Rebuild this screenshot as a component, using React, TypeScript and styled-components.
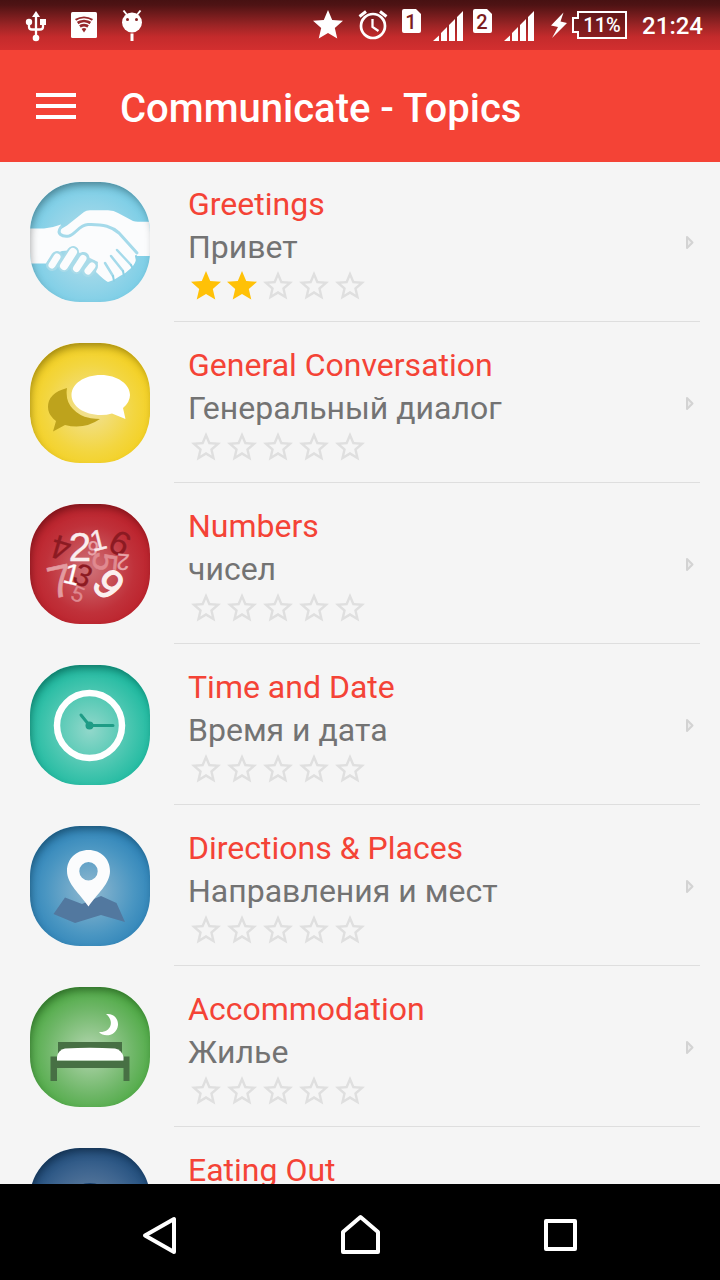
import React from 'react';
import styled, { createGlobalStyle } from 'styled-components';

const GlobalStyle = createGlobalStyle`
  *, *::before, *::after { box-sizing: border-box; }
  body {
    margin: 0;
    background: #f5f5f5;
    font-family: Roboto, "Noto Sans", sans-serif;
  }
`;

const Screen = styled.div`
  display: flex;
  flex-direction: column;
  height: 100vh;
  overflow: hidden;
`;

/* ---------- status bar ---------- */

const StatusBar = styled.div`
  display: flex;
  justify-content: space-between;
  flex: none;
  height: 50px;
  padding: 0 17px 0 24px;
  color: #fff;
  background: linear-gradient(#471112 0%, #4e1314 10%, #9a2425 50%, #c42b2c 74%, #d32f2f 100%);
`;

const StatusGroup = styled.div<{ $gap: number }>`
  display: flex;
  gap: ${(p) => p.$gap}px;
`;

const StatusSvg = styled.svg`
  display: block;
  flex: none;
  height: 50px;
  font-family: Roboto, sans-serif;
  font-weight: 500;
`;

const Clock = styled.time`
  font-size: 24px;
  font-weight: 500;
  line-height: 52px;
`;

const SimSignal = ({ slot }: { slot: number }) => (
  <StatusSvg width={61} viewBox="0 0 61 50" role="img" aria-label={`SIM ${slot} signal`}>
    <path d="M2 9H14L19 14V31Q19 33 17 33H2Q0 33 0 31V11Q0 9 2 9Z" fill="#fff" />
    <text x="9" y="29" fontSize="20" textAnchor="middle" fill="#7c1d1e">{slot}</text>
    <path d="M31 41L37 35.500V41ZM39 33L45 27V41H39ZM47 25L53 19V41H47ZM55 17L61 11V41H55Z" fill="#fff" />
  </StatusSvg>
);

/* ---------- app bar ---------- */

const AppBar = styled.header`
  display: flex;
  align-items: center;
  gap: 40px;
  flex: none;
  height: 112px;
  padding: 0 32px;
  background: #f44336;
  color: #fff;
`;

const MenuButton = styled.button`
  display: flex;
  flex-direction: column;
  gap: 7px;
  width: 48px;
  padding: 4px;
  border: 0;
  background: none;
  color: inherit;
`;

const MenuBar = styled.span`
  height: 4px;
  background: currentColor;
`;

const Heading = styled.h1`
  margin: 0;
  padding-top: 6px;
  font-size: 40px;
  font-weight: 500;
  line-height: 48px;
  white-space: nowrap;
`;

/* ---------- topic list ---------- */

const TopicList = styled.ul`
  flex: 1;
  min-height: 0;
  margin: 0;
  padding: 0;
  list-style: none;
  overflow-y: auto;
  scrollbar-width: none;
  background: #f5f5f5;
`;

const TopicLink = styled.a`
  display: flex;
  gap: 24px;
  padding: 0 20px 1px 30px;
  color: inherit;
  text-decoration: none;
`;

const Tile = styled.div<{ $edge: string; $mid: string; $center: string }>`
  position: relative;
  flex: none;
  width: 120px;
  height: 120px;
  margin-top: 20px;
  border-radius: 50px;
  overflow: hidden;
  background: radial-gradient(circle at 50% 54%, ${(p) => p.$center} 0%, ${(p) => p.$mid} 50%, ${(p) => p.$edge} 92%);

  &::after {
    content: "";
    position: absolute;
    inset: 0;
    border-radius: inherit;
    box-shadow: inset 2px 5px 9px -2px rgba(0, 0, 0, 0.38);
  }

  svg { display: block; width: 100%; height: 100%; }
`;

const TopicBody = styled.div`
  display: flex;
  flex: 1;
  min-width: 0;
  align-items: center;
  justify-content: space-between;
  padding: 21px 4px 16px 14px;
  border-bottom: 1px solid #dedede;
`;

const TopicText = styled.div`
  align-self: flex-start;
`;

const TopicName = styled.h2`
  margin: 0;
  font-size: 32px;
  font-weight: 400;
  line-height: 43px;
  color: #f44336;
`;

const Translation = styled.p`
  margin: 0;
  font-size: 32px;
  line-height: 43px;
  color: #737373;
`;

const Rating = styled.div`
  display: flex;
  height: 37px;
  margin-top: -1px;

  svg { width: 36px; height: 36px; }
`;

const Chevron = styled.svg`
  flex: none;
  width: 12px;
  height: 18px;
  fill: #ececec;
  stroke: #d3d3d3;
  stroke-width: 2;
  stroke-linejoin: round;
`;

/* ---------- navigation bar ---------- */

const NavBar = styled.nav`
  display: flex;
  justify-content: center;
  gap: 104px;
  flex: none;
  height: 96px;
  background: #000;
`;

const NavButton = styled.button`
  width: 96px;
  height: 96px;
  padding: 0;
  border: 0;
  background: none;

  svg {
    display: block;
    fill: none;
    stroke: #fff;
    stroke-width: 4;
    stroke-linejoin: round;
  }
`;

/* ---------- artwork ---------- */

const Handshake = () => (
  <svg viewBox="0 0 120 120" aria-hidden="true">
    <path
      fill="#fbfcfd"
      d="M0 46.500H14Q22 46 31 42.500L29.500 48L37 43.500L54 30Q56 28.300 60 28.300H78Q84 28.300 88 31L103 39Q105 39.700 108 39.700H120V74H107L106 78Q104 84 100 87Q95 92 90 94Q85 98 78 100Q74 98 66 90L68 80L58 75L44 68L32 69L22 73L16 81.500H0Z"
    />
    <g fill="none" strokeLinecap="round" strokeLinejoin="round">
      <path stroke="#a9dbe9" strokeWidth="12" d="M22 83L27 75M34 84L43 70M46.500 86L53.500 76M58 89L62 84" />
      <path stroke="#fbfcfd" strokeWidth="7" d="M22 83L27 75M46.500 86.500L53 76.500M58 89L62 84" />
      <path stroke="#fbfcfd" strokeWidth="8" d="M34 84L43 70" />
      <path stroke="#a5daea" strokeWidth="3" d="M31 45C26 52 32 55 39 54C46 52 49 43 58 42.500C74 42 82 45 89 51L107 71" />
      <path stroke="#a5daea" strokeWidth="2.500" d="M87 68L101 83M81 74L93 89M75 81L83 94" />
      <path stroke="#8bd0e4" strokeWidth="2" d="M106 74L107 79M101 83L103 87M93 89L94 94M83 94L84 99" />
    </g>
  </svg>
);

const Bubbles = () => (
  <svg viewBox="0 0 120 120" aria-hidden="true">
    <path fill="#bea31c" d="M37 45Q18 50 18 64Q18 72 26 78L23 88.500L35 82Q54 87 70 76Q52 76 43 66Q35 58 37 45Z" />
    <path fill="#fff" d="M71 32C87 32 100 41 100 52Q100 59 93 65L95.500 76L82 70.500Q77 72 71 72C54 72 41.500 63 41.500 52S54 32 71 32Z" />
  </svg>
);

type Glyph = [text: string, x: number, y: number, size: number, turn: number, color: string, weight: number];

const glyphs: Glyph[] = [
  ['7', 30, 77, 45, -12, '#e39ba0', 0.6],
  ['4', 31, 44, 34, 196, '#8c1a22', 0.3],
  ['6', 90, 39, 34, 28, '#8c1a22', 0.3],
  ['3', 53, 71, 31, 24, '#8c1a22', 0.3],
  ['5', 75, 58, 34, 96, '#e08a90', 0.6],
  ['5', 48, 90, 22, 22, '#df8990', 0.3],
  ['9', 63, 44, 20, 8, '#e8a5a9', 0.3],
  ['2', 93, 58, 23, 184, '#e8a5a9', 0.3],
  ['1', 68, 36, 29, -14, '#f9e9ea', 0.3],
  ['1', 42, 70, 29, 14, '#fff', 0.3],
  ['2', 50, 43, 41, 0, '#faeeee', 0.3],
  ['9', 79, 80, 42, 48, '#fbf0f0', 1.2],
];

const Digits = () => (
  <svg viewBox="0 0 120 120" aria-hidden="true" fontFamily="Liberation Sans, sans-serif">
    {glyphs.map(([text, x, y, size, turn, color, weight], i) => (
      <g key={i} transform={`translate(${x} ${y}) rotate(${turn})`}>
        <text textAnchor="middle" y={size * 0.35} fontSize={size} fill={color} stroke={color} strokeWidth={weight}>{text}</text>
      </g>
    ))}
  </svg>
);

const WallClock = () => (
  <svg viewBox="0 0 120 120" aria-hidden="true">
    <circle cx="59.500" cy="60.500" r="32.500" fill="none" stroke="#fff" strokeWidth="6.500" />
    <path d="M51 50L59.500 60.500H83" fill="none" stroke="#1f9c86" strokeWidth="3" strokeLinecap="round" />
    <circle cx="59.500" cy="60.500" r="4" fill="#1f9c86" />
  </svg>
);

const MapPin = () => (
  <svg viewBox="0 0 120 120" aria-hidden="true">
    <path fill="#52789f" d="M35 71.500L52 78L71 70L86.500 77L95 96L71 89L45 97L23.500 88Z" />
    <path fill="#fbfcfd" fillRule="evenodd" d="M58.500 24C71 24 80 33 80 45C80 58 67 68 58.500 80.500C50 68 37 58 37 45C37 33 46 24 58.500 24ZM58.500 36A9.200 9.200 0 1 0 58.500 54.400A9.200 9.200 0 1 0 58.500 36Z" />
  </svg>
);

const Bed = () => (
  <svg viewBox="0 0 120 120" aria-hidden="true">
    <path fill="#fff" d="M76 27C84 26 88.500 32 88 38C87 49 74 51 69 45C81 46 85 34 76 27Z" />
    <path fill="#477044" d="M28 55H92V70H28ZM20.500 69.500H27V73.500H93V69.500H99.500V94H93.500V81H27V94H20.500Z" />
    <path fill="#fff" d="M27 73.500V70Q28 63 35 61.500Q60 60 85 61.500Q92 63 93.500 70V73.500Z" />
  </svg>
);

const Plate = () => (
  <svg viewBox="0 0 120 120" aria-hidden="true">
    <circle cx="60" cy="61" r="26" fill="#183f6c" />
  </svg>
);

interface Topic {
  name: string;
  translation?: string;
  stars: number;
  edge: string;
  mid: string;
  center: string;
  art: React.ReactNode;
}

const topics: Topic[] = [
  { name: 'Greetings', translation: 'Привет', stars: 2, edge: '#66c8e4', mid: '#8fd3e8', center: '#b9dfea', art: <Handshake /> },
  { name: 'General Conversation', translation: 'Генеральный диалог', stars: 0, edge: '#f4cb08', mid: '#f3d640', center: '#f1e29c', art: <Bubbles /> },
  { name: 'Numbers', translation: 'чисел', stars: 0, edge: '#b8141e', mid: '#c0313a', center: '#cf7278', art: <Digits /> },
  { name: 'Time and Date', translation: 'Время и дата', stars: 0, edge: '#00b094', mid: '#41c4ad', center: '#92d8cb', art: <WallClock /> },
  { name: 'Directions & Places', translation: 'Направления и мест', stars: 0, edge: '#1a76b1', mid: '#4a96c2', center: '#92b9d0', art: <MapPin /> },
  { name: 'Accommodation', translation: 'Жилье', stars: 0, edge: '#35a029', mid: '#6db666', center: '#b4d6b0', art: <Bed /> },
  { name: 'Eating Out', stars: 0, edge: '#0d3e70', mid: '#3d648f', center: '#7089a6', art: <Plate /> },
];

const FULL_STAR = 'M12 17.270L18.180 21L16.540 13.970L22 9.240L14.810 8.630L12 2L9.190 8.630L2 9.240L7.460 13.970L5.820 21Z';
const STAR_HOLE = 'M12 15.400L8.240 17.670L9.240 13.390L5.920 10.510L10.300 10.130L12 6.100L13.710 10.140L18.090 10.520L14.770 13.400L15.770 17.680Z';

const Stars = ({ value }: { value: number }) => (
  <Rating role="img" aria-label={`${value} of 5 stars`}>
    {[1, 2, 3, 4, 5].map((n) => (
      <svg key={n} viewBox="0 0 24 24" aria-hidden="true">
        <path
          fillRule="evenodd"
          fill={n <= value ? '#ffc107' : '#dfdfdf'}
          d={n <= value ? FULL_STAR : FULL_STAR + STAR_HOLE}
        />
      </svg>
    ))}
  </Rating>
);

export default function App() {
  return (
    <Screen>
      <GlobalStyle />
      <StatusBar>
        <StatusGroup $gap={22}>
          <StatusSvg width={24} viewBox="0 0 24 50" role="img" aria-label="USB connected">
            <path d="M12 14V37M5 23V27Q5 29.500 8 29.500H16Q19 29.500 19 27V23" fill="none" stroke="#fff" strokeWidth="2.300" />
            <path d="M12 11L16 17H8ZM16 19H22V25H16Z" fill="#fff" />
            <circle cx="5" cy="22" r="3.200" fill="#fff" />
            <circle cx="12" cy="38" r="3.300" fill="#fff" />
          </StatusSvg>
          <StatusSvg width={28} viewBox="0 0 28 50" role="img" aria-label="Wi-Fi">
            <rect x="1" y="12" width="26" height="26" rx="1.500" fill="#fff" />
            <path d="M5 19Q14 14 23 19L14 32.500Z" fill="#96272a" />
            <path d="M5 22Q14 16 23 22M7.500 25.500Q14 20.500 20.500 25.500M10 29Q14 25.500 18 29" fill="none" stroke="#fff" strokeWidth="1.300" />
          </StatusSvg>
          <StatusSvg width={24} viewBox="0 0 24 50" role="img" aria-label="Debugging">
            <circle cx="12" cy="22.500" r="10" fill="#fff" />
            <path d="M3.500 10.500L7.500 15.500M20.500 10.500L16.500 15.500" stroke="#fff" strokeWidth="2" />
            <path d="M12 33.500V41" stroke="#fff" strokeWidth="3" />
            <circle cx="7.500" cy="19.500" r="1.500" fill="#852021" />
            <circle cx="16.500" cy="19.500" r="1.500" fill="#852021" />
          </StatusSvg>
        </StatusGroup>
        <StatusGroup $gap={14}>
          <StatusSvg width={32} viewBox="0 0 32 50" role="img" aria-label="Starred">
            <path transform="translate(-2 7) scale(1.500)" d={FULL_STAR} fill="#fff" />
          </StatusSvg>
          <StatusSvg width={30} viewBox="0 0 30 50" role="img" aria-label="Alarm set">
            <circle cx="15" cy="26" r="12" fill="none" stroke="#fff" strokeWidth="2.700" />
            <path d="M14.500 19V27L20.500 31" fill="none" stroke="#fff" strokeWidth="2.300" />
            <path d="M1.500 16.500L8 11.500M28.500 16.500L22 11.500" stroke="#fff" strokeWidth="3" />
          </StatusSvg>
          <StatusGroup $gap={10}>
            <SimSignal slot={1} />
            <SimSignal slot={2} />
          </StatusGroup>
          <StatusSvg width={80} viewBox="0 0 80 50" role="img" aria-label="Battery charging, 11%">
            <path d="M15.500 12.500L3 25.500L10 27L4 38L19 23L12.500 21.500Z" fill="#fff" />
            <path d="M30 12H78V38H30V32H25V18H30Z" fill="#5b1415" fillOpacity="0.550" stroke="#fff" strokeWidth="2" />
            <text x="54" y="32" fontSize="20" textAnchor="middle" fill="#fff">11%</text>
          </StatusSvg>
          <Clock>21:24</Clock>
        </StatusGroup>
      </StatusBar>

      <AppBar>
        <MenuButton type="button" aria-label="Open menu">
          <MenuBar />
          <MenuBar />
          <MenuBar />
        </MenuButton>
        <Heading>Communicate - Topics</Heading>
      </AppBar>

      <TopicList>
        {topics.map((t) => (
          <li key={t.name}>
            <TopicLink href="#">
              <Tile $edge={t.edge} $mid={t.mid} $center={t.center}>{t.art}</Tile>
              <TopicBody>
                <TopicText>
                  <TopicName>{t.name}</TopicName>
                  {t.translation && <Translation>{t.translation}</Translation>}
                  <Stars value={t.stars} />
                </TopicText>
                <Chevron viewBox="0 0 12 18" aria-hidden="true">
                  <path d="M3 2V13L8.500 7.500Z" />
                </Chevron>
              </TopicBody>
            </TopicLink>
          </li>
        ))}
      </TopicList>

      <NavBar>
        <NavButton type="button" aria-label="Back">
          <svg width="96" height="96" viewBox="0 0 96 96"><path d="M62 35V68L33 51.500Z" /></svg>
        </NavButton>
        <NavButton type="button" aria-label="Home">
          <svg width="96" height="96" viewBox="0 0 96 96"><path d="M48.500 33L66 48V68H31V48Z" /></svg>
        </NavButton>
        <NavButton type="button" aria-label="Recent apps">
          <svg width="96" height="96" viewBox="0 0 96 96"><path d="M34 37H63V65H34Z" /></svg>
        </NavButton>
      </NavBar>
    </Screen>
  );
}
